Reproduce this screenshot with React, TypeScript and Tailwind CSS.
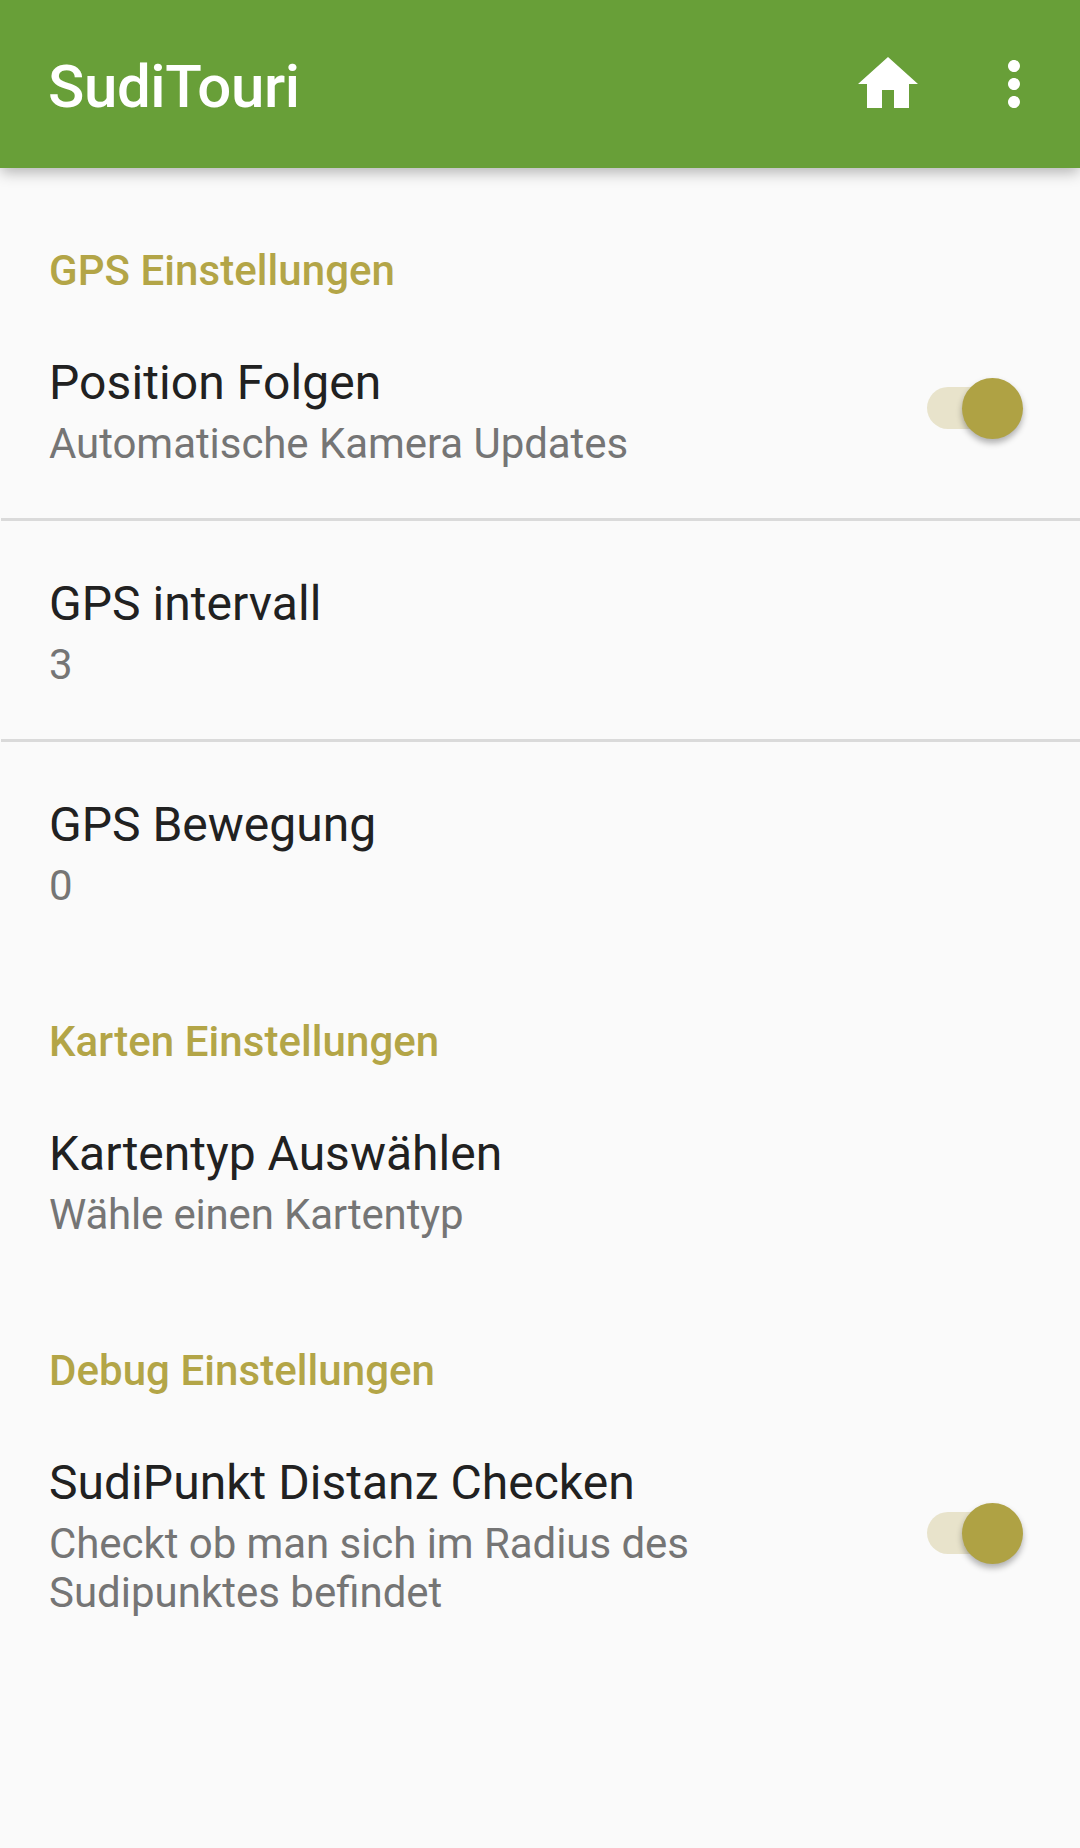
import React from "react";

function Toggle({ className }: { className: string }) {
  return (
    <div className={`relative h-[62px] w-[97px] shrink-0 ${className}`}>
      <div className="absolute left-0 top-[9px] h-[42px] w-[84px] rounded-full bg-[#e8e3cb]" />
      <div className="absolute left-[35px] top-0 h-[61px] w-[61px] rounded-full bg-[#afa244] shadow-[0_4px_6px_rgba(0,0,0,0.3)]" />
    </div>
  );
}

function Heading({ children, className }: { children: React.ReactNode; className: string }) {
  return <h2 className={`px-[49px] text-[42px] leading-[50px] font-medium tracking-[0.06px] text-[#b3a547] ${className}`}>{children}</h2>;
}

type RowProps = {
  title: string;
  text: React.ReactNode;
  className: string;
  titleClass?: string;
  toggleClass?: string;
};

function Row({ title, text, className, titleClass = "", toggleClass }: RowProps) {
  return (
    <div className={`flex items-start justify-between pl-[49px] pr-[56px] ${className}`}>
      <div>
        <div className={`text-[48px] leading-[56px] text-[#212121] ${titleClass}`}>{title}</div>
        <div className="mt-[8px] text-[42px] leading-[49px] tracking-[-0.06px] text-[#757575]">{text}</div>
      </div>
      {toggleClass && <Toggle className={toggleClass} />}
    </div>
  );
}

export default function App() {
  return (
    <div className="h-[1848px] w-[1080px] overflow-hidden bg-[#fafafa] font-['Roboto',sans-serif]">
      <header className="flex h-[168px] items-center bg-[#689f38] pl-[48px] pr-[30px] shadow-[0_5px_14px_-1px_rgba(0,0,0,0.3)]">
        <h1 className="flex-1 pt-[5px] text-[60px] leading-[70px] font-medium tracking-[-0.4px] text-white">SudiTouri</h1>
        <svg className="mr-[54px] size-[72px]" viewBox="0 0 24 24" fill="white"><path d="M10 20v-6h4v6h5v-8h3L12 3 2 12h3v8z" /></svg>
        <svg className="size-[72px]" viewBox="0 0 24 24" fill="white"><path d="M12 8c1.1 0 2-.9 2-2s-.9-2-2-2-2 .9-2 2 .9 2 2 2zm0 2c-1.1 0-2 .9-2 2s.9 2 2 2 2-.9 2-2-.9-2-2-2zm0 6c-1.1 0-2 .9-2 2s.9 2 2 2 2-.9 2-2-.9-2-2-2z" /></svg>
      </header>
      <main>
        <Heading className="pt-[78px]">GPS Einstellungen</Heading>
        <Row className="h-[222px] pt-[59px]" title="Position Folgen" titleClass="tracking-[0.1px]" text="Automatische Kamera Updates" toggleClass="mt-[23px]" />
        <div className="ml-px h-[3px] bg-[#dadada]" />
        <Row className="h-[218px] pt-[55px]" title="GPS intervall" titleClass="tracking-[0.05px]" text="3" />
        <div className="ml-px h-[3px] bg-[#dadada]" />
        <Row className="h-[218px] pt-[55px]" title="GPS Bewegung" text="0" />
        <Heading className="pt-[57px]">Karten Einstellungen</Heading>
        <Row className="h-[222px] pt-[59px]" title="Kartentyp Auswählen" text={<span className="tracking-[-0.17px]">Wähle einen Kartentyp</span>} />
        <Heading className="pt-[57px]">Debug Einstellungen</Heading>
        <Row
          className="h-[270px] pt-[59px]"
          title="SudiPunkt Distanz Checken"
          titleClass="tracking-[0.03px]"
          text={<>Checkt ob man sich im Radius des<br /><span className="tracking-normal">Sudipunktes befindet</span></>}
          toggleClass="mt-[48px]"
        />
      </main>
    </div>
  );
}
